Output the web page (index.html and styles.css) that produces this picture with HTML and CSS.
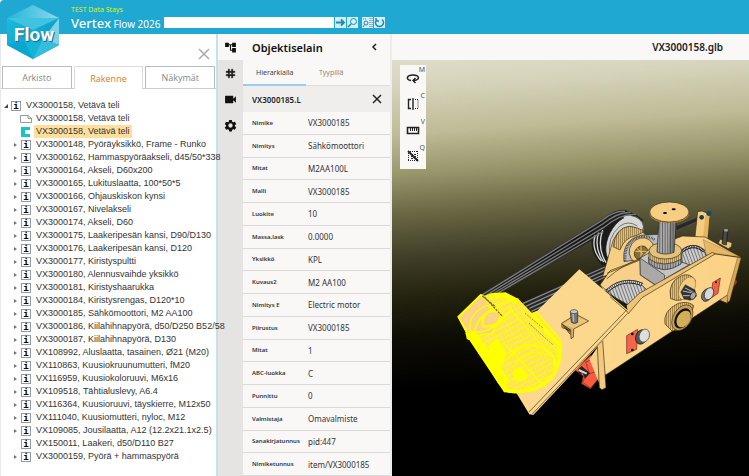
FILE: index.html
```html
<!DOCTYPE html>
<html lang="fi">
<head>
<meta charset="utf-8">
<title>Vertex Flow 2026</title>
<link rel="stylesheet" href="styles.css">
</head>
<body>
<header class="topbar">
  <svg class="logo" viewBox="0 0 52 54" role="img" aria-label="Flow">
    <defs>
      <linearGradient id="hexTop" x1="0" y1="0" x2="1" y2="0"><stop offset="0" stop-color="#21b5da"/><stop offset="1" stop-color="#8bd8ec"/></linearGradient>
      <linearGradient id="hexSide" x1="0" y1="0" x2="1" y2="1"><stop offset="0" stop-color="#1fc0e0"/><stop offset="1" stop-color="#0593bd"/></linearGradient>
    </defs>
    <path d="M26 0 52 13V40L26 54 0 40V13Z" fill="url(#hexSide)"/>
    <path d="M26 0 52 13 0 13Z" fill="url(#hexTop)"/>
    <path d="M0 13H52L26 25Z" fill="#3fc3e0"/>
    <path d="M52 13V40L36 34Z" fill="#7dd2e8"/>
    <path d="M0 40 17 36 26 54Z" fill="#0aa6cd"/>
    <path d="M17 36H36L26 54Z" fill="#12b4d8"/>
    <path d="M36 34 52 40 26 54Z" fill="#35bddb"/>
    <text x="8" y="37" class="logo-shadow">Flow</text>
    <text x="7" y="36" class="logo-text">Flow</text>
  </svg>
  <div class="brand">
    <div class="env">TEST Data Stays</div>
    <div class="product"><strong>Vertex</strong> Flow 2026</div>
  </div>
  <form class="search">
    <input type="search" aria-label="Haku">
    <button type="button" aria-label="Siirry"><svg viewBox="0 0 11 11"><path d="M1 5.500H9M6 2.500 9 5.500 6 8.500" stroke-width="1.800"/></svg></button>
    <button type="button" aria-label="Etsi"><svg viewBox="0 0 11 11"><circle cx="6.500" cy="4.500" r="3"/><path d="M4 7 1 10" stroke-width="1.600"/></svg></button>
    <button type="button" class="apart" aria-label="Etsi rakenteesta"><svg viewBox="0 0 11 11"><path d="M1 2H5M8 1V10M10 1V10" stroke-dasharray="1 1"/><circle cx="4" cy="6" r="2"/><path d="M2.500 7.500 1 10"/></svg></button>
    <button type="button" aria-label="Päivitä"><svg viewBox="0 0 11 11"><path d="M3 2.500A4 4 0 1 0 8 2.500M2 1V4H5" stroke-width="1.500"/></svg></button>
  </form>
</header>
<main class="workspace">
  <section class="archive">
    <button type="button" class="archive-close" aria-label="Sulje"><svg viewBox="0 0 12 12"><path d="M1 1 11 11M11 1 1 11"/></svg></button>
    <nav class="archive-tabs">
      <button type="button">Arkisto</button>
      <button type="button" class="active">Rakenne</button>
      <button type="button">Näkymät</button>
    </nav>
    <ul class="tree">
      <li class="root"><button type="button" class="toggle open" aria-label="Sulje haara"></button><span class="item-icon">i</span><a href="#">VX3000158, Vetävä teli</a></li>
      <li><span class="toggle-space"></span><svg class="doc-icon" viewBox="0 0 12 10"><path d="M.5 1.500H8L11.500 4.500V8.500H.5ZM8 1.500V4.500H11.500" fill="#fff" stroke="#999"/></svg><a href="#">VX3000158, Vetävä teli</a></li>
      <li><span class="toggle-space"></span><svg class="doc-icon" viewBox="0 0 12 10"><path d="M1 0H10V3H5V7H10V10H1Z" fill="#12c5cb"/></svg><a href="#" class="selected">VX3000158, Vetävä teli</a></li>
      <li><button type="button" class="toggle" aria-label="Avaa"></button><span class="item-icon">i</span><a href="#">VX3000148, Pyöräyksikkö, Frame - Runko</a></li>
      <li><button type="button" class="toggle" aria-label="Avaa"></button><span class="item-icon">i</span><a href="#">VX3000162, Hammaspyöräakseli, d45/50*338</a></li>
      <li><button type="button" class="toggle" aria-label="Avaa"></button><span class="item-icon">i</span><a href="#">VX3000164, Akseli, D60x200</a></li>
      <li><button type="button" class="toggle" aria-label="Avaa"></button><span class="item-icon">i</span><a href="#">VX3000165, Lukituslaatta, 100*50*5</a></li>
      <li><button type="button" class="toggle" aria-label="Avaa"></button><span class="item-icon">i</span><a href="#">VX3000166, Ohjauskiskon kynsi</a></li>
      <li><button type="button" class="toggle" aria-label="Avaa"></button><span class="item-icon">i</span><a href="#">VX3000167, Nivelakseli</a></li>
      <li><button type="button" class="toggle" aria-label="Avaa"></button><span class="item-icon">i</span><a href="#">VX3000174, Akseli, D60</a></li>
      <li><button type="button" class="toggle" aria-label="Avaa"></button><span class="item-icon">i</span><a href="#">VX3000175, Laakeripesän kansi, D90/D130</a></li>
      <li><button type="button" class="toggle" aria-label="Avaa"></button><span class="item-icon">i</span><a href="#">VX3000176, Laakeripesän kansi, D120</a></li>
      <li><button type="button" class="toggle" aria-label="Avaa"></button><span class="item-icon">i</span><a href="#">VX3000177, Kiristyspultti</a></li>
      <li><button type="button" class="toggle" aria-label="Avaa"></button><span class="item-icon">i</span><a href="#">VX3000180, Alennusvaihde yksikkö</a></li>
      <li><button type="button" class="toggle" aria-label="Avaa"></button><span class="item-icon">i</span><a href="#">VX3000181, Kiristyshaarukka</a></li>
      <li><button type="button" class="toggle" aria-label="Avaa"></button><span class="item-icon">i</span><a href="#">VX3000184, Kiristysrengas, D120*10</a></li>
      <li><button type="button" class="toggle" aria-label="Avaa"></button><span class="item-icon">i</span><a href="#">VX3000185, Sähkömoottori, M2 AA100</a></li>
      <li><button type="button" class="toggle" aria-label="Avaa"></button><span class="item-icon">i</span><a href="#">VX3000186, Kiilahihnapyörä, d50/D250 B52/58</a></li>
      <li><button type="button" class="toggle" aria-label="Avaa"></button><span class="item-icon">i</span><a href="#">VX3000187, Kiilahihnapyörä, D130</a></li>
      <li><button type="button" class="toggle" aria-label="Avaa"></button><span class="item-icon">i</span><a href="#">VX108992, Aluslaatta, tasainen, Ø21 (M20)</a></li>
      <li><button type="button" class="toggle" aria-label="Avaa"></button><span class="item-icon">i</span><a href="#">VX110863, Kuusiokruunumutteri, fM20</a></li>
      <li><button type="button" class="toggle" aria-label="Avaa"></button><span class="item-icon">i</span><a href="#">VX116959, Kuusiokoloruuvi, M6x16</a></li>
      <li><button type="button" class="toggle" aria-label="Avaa"></button><span class="item-icon">i</span><a href="#">VX109518, Tähtialuslevy, A6.4</a></li>
      <li><button type="button" class="toggle" aria-label="Avaa"></button><span class="item-icon">i</span><a href="#">VX116364, Kuusioruuvi, täyskierre, M12x50</a></li>
      <li><button type="button" class="toggle" aria-label="Avaa"></button><span class="item-icon">i</span><a href="#">VX111040, Kuusiomutteri, nyloc, M12</a></li>
      <li><button type="button" class="toggle" aria-label="Avaa"></button><span class="item-icon">i</span><a href="#">VX109085, Jousilaatta, A12 (12.2x21.1x2.5)</a></li>
      <li><span class="toggle-space"></span><span class="item-icon">i</span><a href="#">VX150011, Laakeri, d50/D110 B27</a></li>
      <li><button type="button" class="toggle" aria-label="Avaa"></button><span class="item-icon">i</span><a href="#">VX3000159, Pyörä + hammaspyörä</a></li>
    </ul>
  </section>
  <nav class="rail">
    <button type="button" class="active" aria-label="Objektiselain"><svg viewBox="0 0 24 24"><path d="M22 11V3h-7v3H9V3H2v8h7V8h2v10h4v3h7v-8h-7v3h-2V8h2v3z"/></svg></button>
    <button type="button" aria-label="Ruudukko"><svg viewBox="0 0 24 24"><path d="M20 10V8h-4V4h-2v4h-4V4H8v4H4v2h4v4H4v2h4v4h2v-4h4v4h2v-4h4v-2h-4v-4h4zm-6 4h-4v-4h4v4z" stroke="#111"/></svg></button>
    <button type="button" aria-label="Kamera"><svg viewBox="0 0 24 24"><path d="M17 10.500V6c0-.6-.4-1-1-1H3c-.6 0-1 .4-1 1v12c0 .6.400 1 1 1h13c.6 0 1-.4 1-1v-4.500l5 4.500V6z"/></svg></button>
    <button type="button" aria-label="Asetukset"><svg viewBox="0 0 24 24"><path fill-rule="evenodd" d="M9.500 2h5l.6 3 2 1.200 3-1 2.400 4.200-2.300 2.100v2l2.300 2.100-2.400 4.200-3-1-2 1.200-.6 3h-5l-.6-3-2-1.200-3 1L1.500 15.600l2.300-2.100v-2L1.500 9.400l2.400-4.200 3 1 2-1.200zM12 8a4 4 0 1 0 0 8 4 4 0 0 0 0-8z"/></svg></button>
  </nav>
  <section class="browser">
    <header class="browser-head">
      <h2>Objektiselain</h2>
      <button type="button" aria-label="Pienennä"><svg viewBox="0 0 10 10"><path d="M6 2 3 5 6 8"/></svg></button>
    </header>
    <nav class="browser-tabs">
      <button type="button" class="active">Hierarkialla</button>
      <button type="button">Tyypillä</button>
    </nav>
    <header class="object-head">
      <h3>VX3000185.L</h3>
      <button type="button" aria-label="Poista valinta"><svg viewBox="0 0 10 10"><path d="M1 1 9 9M9 1 1 9"/></svg></button>
    </header>
    <dl class="props">
      <div><dt>Nimike</dt><dd>VX3000185</dd></div>
      <div><dt>Nimitys</dt><dd>Sähkömoottori</dd></div>
      <div><dt>Mitat</dt><dd>M2AA100L</dd></div>
      <div><dt>Malli</dt><dd>VX3000185</dd></div>
      <div><dt>Luokite</dt><dd>10</dd></div>
      <div><dt>Massa,lask</dt><dd>0.0000</dd></div>
      <div><dt>Yksikkö</dt><dd>KPL</dd></div>
      <div><dt>Kuvaus2</dt><dd>M2 AA100</dd></div>
      <div><dt>Nimitys E</dt><dd>Electric motor</dd></div>
      <div><dt>Piirustus</dt><dd>VX3000185</dd></div>
      <div><dt>Mitat</dt><dd>1</dd></div>
      <div><dt>ABC-luokka</dt><dd>C</dd></div>
      <div><dt>Punnittu</dt><dd>0</dd></div>
      <div><dt>Valmistaja</dt><dd>Omavalmiste</dd></div>
      <div><dt>Sanakirjatunnus</dt><dd>pid:447</dd></div>
      <div><dt>Nimiketunnus</dt><dd>item/VX3000185</dd></div>
    </dl>
  </section>
  <section class="viewer">
    <header class="viewer-head"><h1>VX3000158.glb</h1></header>
    <div class="stage">
      <svg class="model" viewBox="6 90 1071 1248" role="img" aria-label="Vetävä teli, 3D-malli">
        <defs>
          <pattern id="mesh" width="11" height="15" patternUnits="userSpaceOnUse" patternTransform="rotate(-28)"><rect width="11" height="15" fill="#fbd58a"/><path d="M0 0V15M0 1H11M5 0 8 15" stroke="#ffff00" stroke-width="3" fill="none"/></pattern>
          <pattern id="ribs" width="9" height="20" patternUnits="userSpaceOnUse" patternTransform="rotate(-20)"><rect width="9" height="20" fill="#cfcfcf"/><path d="M1 0V20" stroke="#333" stroke-width="2"/></pattern>
          <pattern id="tanRibs" width="6" height="20" patternUnits="userSpaceOnUse"><rect width="6" height="20" fill="#e2bd72"/><path d="M1 0V20" stroke="#4a3b16" stroke-width="1.500"/></pattern>
          <pattern id="shaft" width="8" height="20" patternUnits="userSpaceOnUse"><rect width="8" height="20" fill="#aaa"/><path d="M1 0V20" stroke="#333" stroke-width="2"/></pattern>
          <linearGradient id="tan" x1="0" y1="0" x2="1" y2="0"><stop offset="0" stop-color="#fbd88f"/><stop offset="1" stop-color="#fbd286"/></linearGradient>
        </defs>
        <g stroke-linejoin="round">
          <!-- drive belts -->
          <path d="M262 800 630 572Q680 535 705 541L760 570 700 590 640 612 312 794Z" fill="#151515" stroke="#333" stroke-width="2"/>
          <path d="M393 820 645 704V742L425 848Z" fill="#252525"/>
          <g fill="none" stroke="#888" stroke-width="4"><path d="M398 821 645 711"/><path d="M407 829 645 721"/><path d="M418 835 645 732"/><path d="M424 844 645 741"/></g>
          <!-- large pulley -->
          <path d="M636 705Q590 660 611 606Q650 540 705 541Q745 552 760 575L735 660 668 712Z" fill="#1b1b1b"/>
          <g fill="none" stroke="#d8d8d8" stroke-width="4"><path d="M634 693Q602 655 616 615"/><path d="M641 696Q611 654 626 608"/><path d="M648 698Q620 652 638 600"/></g>
          <g fill="none" stroke="#7b7b7b" stroke-width="4"><path d="M273 797 635 572Q672 542 705 544"/><path d="M283 799 638 582Q688 544 722 548"/><path d="M292 801 640 593Q696 548 738 554"/><path d="M305 800 640 604"/></g>
          <ellipse cx="703" cy="630" rx="48" ry="78" transform="rotate(27 703 630)" fill="#d6d6d4" stroke="#222" stroke-width="2"/>
          <path d="M700 560Q735 548 757 575Q764 592 758 606L735 625Z" fill="#d6d6d4"/>
          <path d="M724 557Q754 562 761 590L755 606" fill="none" stroke="#222" stroke-width="2"/>
          <path d="M661 678Q648 625 690 588Q715 570 742 588" fill="none" stroke="#444" stroke-width="2"/>
          <!-- gearbox housing -->
          <path d="M638 740 662 655Q675 595 720 589Q770 600 778 640V690L700 722Z" fill="#f6cf82" stroke="#3b2e12" stroke-width="2"/>
          <path d="M669 650Q678 592 718 589Q748 592 762 606L738 617Q704 622 690 660Z" fill="url(#tanRibs)" stroke="#3b2e12" stroke-width="2"/>
          <path d="M702 695Q694 630 754 616Q800 612 850 612L800 680Z" fill="#b9bcc4" stroke="#222" stroke-width="2"/>
          <path d="M706 692Q702 640 742 623Q770 614 795 630" fill="none" stroke="#333" stroke-width="7" stroke-dasharray="2 3"/>
          <ellipse cx="755" cy="662" rx="36" ry="40" transform="rotate(35 755 662)" fill="#f4cd80" stroke="#3b2e12" stroke-width="2"/>
          <ellipse cx="753" cy="668" rx="18" ry="22" transform="rotate(45 753 668)" fill="#8a6d33" stroke="#222" stroke-width="2"/>
          <path d="M736 664H772M740 654 766 680M753 648V690" stroke="#e7c477" stroke-width="3"/>
          <!-- rear frame and tie rod -->
          <path d="M858 588 935 556 940 566 858 602Z" fill="#25272b" stroke="#777" stroke-width="1"/>
          <path d="M923 545 936 543 959 553 950 634 915 620Z" fill="#f6cc7e" stroke="#3b2e12" stroke-width="2"/>
          <path d="M946 556 959 553 952 634 939 626Z" fill="#e4b45e"/>
          <circle cx="935" cy="562" r="7" fill="#153d52"/><circle cx="957" cy="550" r="8" fill="#164a65"/>
          <path d="M780 655 878 618 945 621 1052 682 970 672 760 805 640 782 630 765 660 722 745 690Z" fill="#f8d188" stroke="#3b2e12" stroke-width="2"/>
          <path d="M940 629 1050 680 970 669 950 679Z" fill="#e8b869" stroke="#6c5120" stroke-width="1"/>
          <path d="M650 747Q695 705 756 683M651 730 750 690" fill="none" stroke="#3b2e12" stroke-width="2"/>
          <path d="M990 628 1026 638 1024 650 1015 656 985 640Z" fill="#edc578" stroke="#3b2e12" stroke-width="2"/>
          <path d="M1001 601 1014 599 1009 645 996 641Z" fill="#494949" stroke="#111" stroke-width="2"/>
          <ellipse cx="1008" cy="601" rx="7" ry="4" fill="#999"/>
          <!-- rollers -->
          <path d="M650 788Q690 745 744 755L770 779 715 825Z" fill="url(#ribs)" stroke="#222" stroke-width="2"/>
          <path d="M650 784Q698 739 758 764" fill="none" stroke="#222" stroke-width="11"/><path d="M650 784Q698 739 758 764" fill="none" stroke="#ddd" stroke-width="6" stroke-dasharray="4 2"/>
          <path d="M874 665Q910 640 943 662L950 679 878 719Z" fill="url(#ribs)" stroke="#222" stroke-width="2"/>
          <path d="M874 665Q910 635 943 664" fill="none" stroke="#222" stroke-width="9"/><path d="M874 665Q910 635 943 664" fill="none" stroke="#ddd" stroke-width="4" stroke-dasharray="3 2"/>
          <!-- pedestal and vertical column -->
          <path d="M750 684 782 666 898 704 824 747 824 763 808 773 751 735Z" fill="#c5c5c5" stroke="#222" stroke-width="2"/>
          <path d="M750 684 824 735 822 762 808 772 751 735Z" fill="#aaa9a7" stroke="#333" stroke-width="2"/>
          <path d="M776 682V699Q820 738 873 702V680Z" fill="url(#shaft)" stroke="#222" stroke-width="2"/>
          <path d="M777 665V687Q820 717 875 687V660Z" fill="url(#tanRibs)" stroke="#222" stroke-width="2"/>
          <ellipse cx="826" cy="662" rx="49" ry="25" fill="#e2c27e" stroke="#3b2e12" stroke-width="2"/>
          <path d="M807 572 801 666Q825 678 852 667L859 572Z" fill="url(#shaft)" stroke="#222" stroke-width="2"/>
          <path d="M839 573 836 669 852 667 859 573Z" fill="#333" opacity=".3"/>
          <ellipse cx="838" cy="551" rx="59" ry="29" fill="#a77f3e"/>
          <ellipse cx="838" cy="546" rx="59" ry="30" fill="#f6cd82" stroke="#3b2e12" stroke-width="2"/>
          <ellipse cx="825" cy="549" rx="6" ry="3"/><ellipse cx="851" cy="538" rx="6" ry="3"/>
          <!-- near side plate -->
          <path d="M1036 747Q1046 756 1036 764L1028 770Z" fill="#a82e25"/>
          <path d="M1018 715 1028 716 1012 820 990 811 998 795Z" fill="#ddb163" stroke="#3b2e12" stroke-width="2"/>
          <path d="M620 930 711 845 755 800 970 671 1052 683 1020 790 648 1034 637 1030Z" fill="url(#tan)" stroke="#3b2e12" stroke-width="2"/>
          <path d="M710 826 748 790 967 667 975 672 756 803 714 852" fill="#edc477" stroke="#3b2e12" stroke-width="2"/>
          <path d="M1043 682 1012 793 1013 817 1019 813 1053 684Z" fill="#d6a957" stroke="#3b2e12" stroke-width="1"/>
          <!-- bearings -->
          <path d="M842 806Q832 755 875 737Q900 727 916 751L900 790Q875 822 842 806Z" fill="url(#tanRibs)" stroke="#3b2e12" stroke-width="2"/>
          <ellipse cx="891" cy="775" rx="22" ry="37" transform="rotate(28 891 775)" fill="#f4cc7f" stroke="#5b461b" stroke-width="1"/>
          <path d="M872 786 886 764 915 780 919 799 901 811 882 807Z" fill="#333" stroke="#111"/>
          <path d="M878 783 909 789M885 774 911 787M879 797 905 797" stroke="#bbb" stroke-width="3"/>
          <ellipse cx="909" cy="797" rx="8" ry="12" transform="rotate(25 909 797)" fill="#a6a6a6" stroke="#111" stroke-width="2"/>
          <path d="M825 882Q818 842 865 820 895 812 911 827L900 866Q874 903 846 903Z" fill="url(#tanRibs)" stroke="#3b2e12" stroke-width="2"/>
          <ellipse cx="877" cy="863" rx="27" ry="42" transform="rotate(32 877 863)" fill="#caa253" stroke="#4c3b17" stroke-width="2"/>
          <ellipse cx="878" cy="865" rx="22" ry="33" transform="rotate(32 878 865)" fill="#151109"/>
          <ellipse cx="881" cy="867" rx="19" ry="27" transform="rotate(32 881 867)" fill="#d3ae58"/>
          <!-- red brackets -->
          <path d="M968 758 991 744 984 790 963 804Z" fill="#f4603f" stroke="#66281b" stroke-width="2"/>
          <circle cx="978" cy="757" r="3"/>
          <ellipse cx="950" cy="795" rx="14" ry="20" transform="rotate(25 950 795)" fill="#777" stroke="#111" stroke-width="2"/>
          <ellipse cx="957" cy="791" rx="13" ry="19" transform="rotate(25 957 791)" fill="#d7d7d5" stroke="#222" stroke-width="2"/>
          <path d="M710 917 743 898 740 958 710 971Z" fill="#f56546" stroke="#66281b" stroke-width="2"/>
          <circle cx="727" cy="912" r="4"/><circle cx="727" cy="960" r="4"/>
          <ellipse cx="754" cy="921" rx="17" ry="22" transform="rotate(20 754 921)" fill="#555" stroke="#111" stroke-width="2"/>
          <ellipse cx="763" cy="917" rx="15" ry="20" transform="rotate(20 763 917)" fill="#dededc" stroke="#444" stroke-width="2"/>
          <!-- lower clamp -->
          <path d="M555 1020 603 975 624 1008 630 1040 601 1076 575 1061 580 1038Z" fill="#fb5a3f" stroke="#71291a" stroke-width="2"/>
          <path d="M587 996 605 989 622 1024 598 1031ZM593 1023 578 1057 602 1074M610 1018 627 1014" fill="none" stroke="#792b1c" stroke-width="2"/>
          <path d="M565 1017 575 1008 600 1030 585 1046 578 1029 566 1034Z" fill="#252525"/>
          <path d="M566 1020 590 1031" stroke="#d7d7d7" stroke-width="6"/>
          <path d="M598 988 623 951 632 1070Z" fill="#f7d187"/>
          <path d="M622 948 638 932 648 1073 636 1079 628 1073Z" fill="#f3ca7d" stroke="#3b2e12" stroke-width="2"/>
          <!-- motor plate -->
          <path d="M568 718 715 842 713 853 430 1155 418 1153 375 1082 432 852Z" fill="#fcd78e"/>
          <path d="M710 840 417 1146M713 850 426 1153M660 800 715 848M630 765 710 832" fill="none" stroke="#3b2e12" stroke-width="2"/>
          <path d="M515 880 558 853 596 873 551 897 550 922 543 926 542 902 516 893Z" fill="#d7b26a" stroke="#3b2e12" stroke-width="2"/>
          <path d="M519 882 557 858 592 873 550 895Z" fill="#e9c57b"/>
          <path d="M516 883 543 901M520 889 542 906M527 895 541 913" stroke="#33270e" stroke-width="3"/>
          <path d="M541 845 544 877Q553 884 563 877V845Z" fill="#777" stroke="#222" stroke-width="2"/><path d="M549 850 551 875" stroke="#bbb" stroke-width="4"/>
          <ellipse cx="552" cy="845" rx="11" ry="6" fill="#c6c9ce" stroke="#333" stroke-width="2"/>
          <!-- selected motor -->
          <path d="M204 860 272 794 284 800 302 792 347 789 383 808 425 851 440 845 486 899 513 932 510 992 484 1046 435 1080 375 1088 348 1084 327 1061 249 933 232 926 228 905Z" fill="url(#mesh)" stroke="#ffff00" stroke-width="4"/>
          <path d="M207 862 272 795 300 825 270 900 232 908Z" fill="#fbd186" stroke="#ffff00" stroke-width="4"/>
          <path d="M240 900Q235 850 290 826L335 850 305 910 260 916Z" fill="#fbd186" stroke="#ffff00" stroke-width="4"/>
          <g fill="none" stroke="#ffff00"><path d="M252 925Q250 870 310 835T385 808M245 905Q300 920 365 835" stroke-width="5"/><path d="M280 890Q270 850 311 842Q348 850 329 875Q310 890 280 890" stroke-width="7"/><path d="M232 906 344 1073M245 927 349 1083M247 905 354 1060" stroke-width="15"/><path d="M298 950 320 930 345 975 330 1010 310 1000Z" fill="#ffff00" stroke-width="8"/><path d="M355 984Q400 930 450 951Q502 969 494 1020" stroke-width="7"/><path d="M372 1003Q420 950 476 975M343 940 468 1074M357 832 496 991M398 846 507 970" stroke-width="4"/><path d="M425 852 510 947" stroke-width="11"/><path d="M342 1081Q425 1098 482 1045Q512 1010 510 950" stroke-width="10"/><path d="M374 1025Q389 1004 405 1029T374 1047Z" fill="#ffff00" stroke-width="7"/><path d="M300 800 347 797 379 817" stroke-width="12"/></g>
          <path d="M283 801 338 860M277 798 316 830" stroke="#7d6517" stroke-width="4" stroke-dasharray="7 3"/>
          <path d="M405 850 460 895M417 880 488 944" stroke="#a28731" stroke-width="3" stroke-dasharray="5 4"/>
        </g>
      </svg>
      <div class="tools">
        <button type="button" aria-label="Kierrä"><kbd>M</kbd><svg viewBox="0 0 14 14"><path d="M5 9.500C-1 8.500 1 4 7 4S15 8.500 8 9.500M9.500 7 7 9.500 9.500 12" stroke-width="1.500"/></svg></button>
        <button type="button" aria-label="Leikkaus"><kbd>C</kbd><svg viewBox="0 0 14 14"><path d="M5 2.500H2.500V11.500H5M7 1V13" stroke-width="1.400"/><path d="M9 2.500H12V11.500H9" stroke-dasharray="1 1"/></svg></button>
        <button type="button" aria-label="Mittaa"><kbd>V</kbd><svg viewBox="0 0 14 14"><path d="M1.500 4.500H12.500V10.500H1.500Z" stroke-width="1.600"/><path d="M4.500 5V8M6.500 5V8M8.500 5V8M10.500 5V8"/></svg></button>
        <button type="button" aria-label="Piilota valitut"><kbd>Q</kbd><svg viewBox="0 0 14 14"><path d="M2 2.500H12M2 11.500H12M2.500 2V12M11.500 2V12" stroke-dasharray="1 1"/><path d="M5 5.500H10M5 7.500H10M5 9.500H10" stroke-dasharray="2 1"/><path d="M2 2 12 12" stroke-width="1.800"/></svg></button>
      </div>
    </div>
  </section>
</main>
</body>
</html>
```
FILE: styles.css
```css
* { box-sizing: border-box; }
body {
  margin: 0;
  height: 100vh;
  display: flex;
  flex-direction: column;
  overflow: hidden;
  background: #fff;
  color: #333;
  font-family: "Noto Sans", "Open Sans", sans-serif;
}
button {
  padding: 0;
  border: 0;
  background: none;
  color: inherit;
  font: inherit;
}
h1, h2, h3, dl, dd, ul { margin: 0; padding: 0; }
svg { display: block; }

.topbar {
  position: relative;
  z-index: 2;
  flex: none;
  display: flex;
  align-items: flex-start;
  height: 34px;
  padding-left: 7px;
  border-top-left-radius: 4px;
  background: #1fa8d1;
  color: #fff;
}
.logo { flex: none; width: 52px; height: 54px; margin-top: 5px; }
.logo text { font: 700 19px Roboto, sans-serif; }
.logo-shadow { fill: #176f8d; }
.logo-text { fill: #fff; }
.brand { margin: 5px 3px 0 12px; white-space: nowrap; }
.env { color: #d8f02c; font-size: 7px; line-height: 10px; }
.product { font-size: 10px; line-height: 16px; }
.product strong { font-size: 13px; font-weight: 500; }
.search { display: flex; align-items: center; gap: 1px; margin-top: 17px; }
.search input {
  width: 170px;
  height: 11px;
  padding: 0 2px;
  border: 0;
  background: #fff;
  font-size: 8px;
}
.search button { width: 11px; height: 11px; background: #d6eff7; }
.search button.apart { margin-left: 3px; }
.search svg { width: 11px; height: 11px; fill: none; stroke: #168eb8; }

.workspace { flex: 1; min-height: 0; display: flex; }

/* Long item names may run over the edge of the icon rail. */
.archive {
  position: relative;
  z-index: 1;
  flex: none;
  width: 218px;
  display: flex;
  flex-direction: column;
  border-left: 1px solid #e8e8e8;
  border-right: 2px solid #c3e2ed;
}
.archive-close { align-self: flex-end; margin: 14px 6px 6px 0; }
.archive-close svg { width: 12px; height: 12px; fill: none; stroke: #aaa; stroke-width: 1.5; }
.archive-tabs { display: flex; gap: 2px; padding: 0 1px; border-bottom: 1px solid #ccc; }
.archive-tabs button {
  flex: 1;
  height: 22px;
  border: 1px solid #bbb;
  border-bottom: 0;
  color: #888;
  font-family: "Open Sans", "Noto Sans", sans-serif;
  font-size: 9px;
}
.archive-tabs .active { height: 23px; margin-bottom: -1px; border-color: #ddd; background: #fff; color: #e07b1a; }
.tree {
  padding-top: 10px;
  list-style: none;
  font: 9px/13px "Liberation Sans", Arial, sans-serif;
}
.tree li { display: flex; align-items: center; height: 13px; padding-left: 12px; white-space: nowrap; }
.tree .root { padding-left: 2px; }
.toggle, .toggle-space { flex: none; width: 8px; height: 10px; }
.toggle::before {
  content: "";
  display: block;
  width: 0;
  margin-left: 1px;
  border: 2px solid transparent;
  border-left: 3px solid #777;
  border-right: 0;
}
.toggle.open::before { border: 0; border-left: 4px solid transparent; border-bottom: 4px solid #444; }
.item-icon {
  flex: none;
  width: 10px;
  height: 10px;
  margin-right: 3px;
  border: 1px solid #999;
  color: #000;
  font: 700 9px/8px "DejaVu Sans Mono", monospace;
  text-align: center;
}
.doc-icon { flex: none; width: 12px; height: 10px; margin: 0 2px 0 -1px; }
.tree a { padding: 0 2px; color: #333; text-decoration: none; }
.tree .selected { background: #ffdf9b; }

.rail { flex: none; width: 25px; background: #e5e4e2; }
.rail button { display: flex; align-items: center; justify-content: center; width: 100%; height: 26px; }
.rail .active { background: #f9f8f7; }
.rail svg { width: 13px; height: 13px; fill: #111; }

.browser {
  flex: none;
  width: 149px;
  display: flex;
  flex-direction: column;
  border-right: 2px solid #ececeb;
  background: #f9f8f7;
}
.browser-head, .object-head {
  display: flex;
  align-items: center;
  justify-content: space-between;
  height: 26px;
  padding: 0 8px 0 9px;
}
.browser-head h2 { font-size: 11px; font-weight: 600; color: #111; }
.browser button svg { width: 10px; height: 10px; fill: none; stroke: #222; stroke-width: 1.5; }
.browser-head button { margin-right: 2px; }
.browser-tabs { display: flex; height: 26px; border-bottom: 1px solid #ddd; font-size: 7px; }
.browser-tabs button { width: 63px; height: 26px; padding: 0 13px; border-bottom: 2px solid transparent; color: #888; text-align: left; }
.browser-tabs .active { position: relative; border-bottom-color: #9bcdf0; color: #444; }
.object-head { background: #efeeed; }
.object-head h3 { font-size: 8px; font-weight: 600; color: #222; }
.props { flex: 1; min-height: 0; display: flex; flex-direction: column; }
.props div {
  flex: 1;
  display: grid;
  grid-template-columns: 56px 1fr;
  align-items: center;
  padding-left: 9px;
  border-bottom: 1px solid #dbdad9;
  white-space: nowrap;
}
.props dt { font-size: 6px; font-weight: 600; color: #333; }
.props dd { font-size: 8px; color: #333; }

.viewer { flex: 1; min-width: 0; display: flex; flex-direction: column; }
.viewer-head { flex: none; height: 26px; padding-right: 26px; background: #f9f8f7; text-align: right; }
.viewer-head h1 { font-size: 10px; line-height: 26px; font-weight: 600; color: #222; }
.stage {
  position: relative;
  flex: 1;
  min-height: 0;
  background: linear-gradient(176deg, #dfddca 0%, #d6d4bc 6%, #bebb96 17%, #98966b 26%, #656340 36%, #403e28 45%, #24230f 54%, #0d0c05 64%, #000 75%);
}
.model { width: 100%; height: 100%; }
.tools { position: absolute; left: 8px; top: 5px; width: 26px; background: #f9f8f7; }
.tools button { position: relative; display: flex; align-items: center; justify-content: center; width: 26px; height: 26px; }
.tools svg { width: 14px; height: 14px; fill: none; stroke: #222; }
.tools kbd { position: absolute; top: 1px; right: 1px; color: #555; font: 7px/8px "Noto Sans", sans-serif; }
```
